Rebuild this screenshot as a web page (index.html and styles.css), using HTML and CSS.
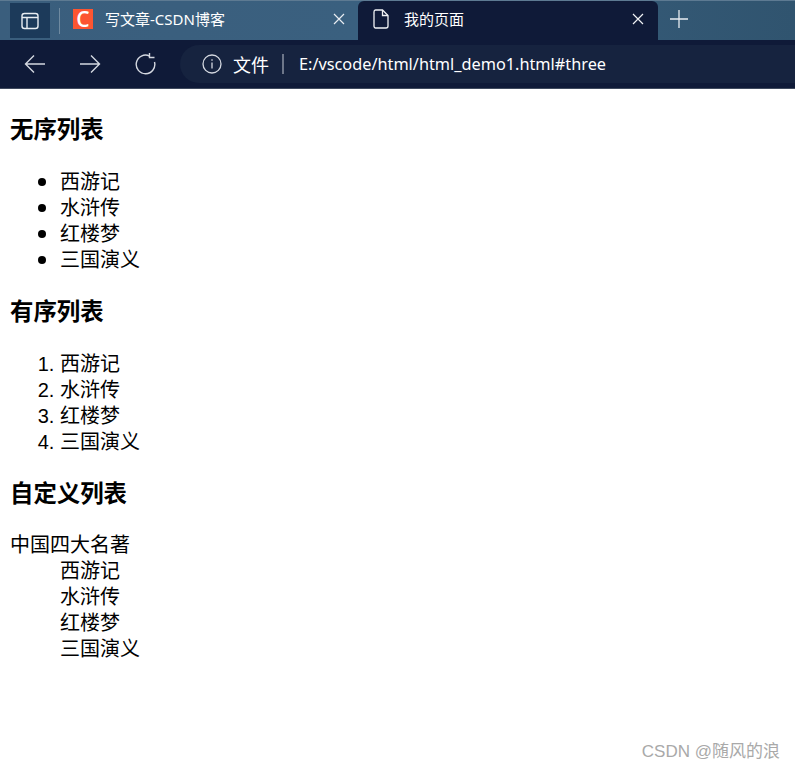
FILE: index.html
```html
<!DOCTYPE html>
<html lang="zh-CN">
<head>
<meta charset="utf-8">
<title>我的页面</title>
<link rel="stylesheet" href="styles.css">
</head>
<body>
<header class="chrome">
  <div class="tabbar">
    <button class="side-btn" aria-label="标签页">
      <svg width="20" height="20" viewBox="0 0 20 20" fill="none" stroke="#e8edf2" stroke-width="1.4"><rect x="2" y="2.5" width="16" height="15" rx="2.5"/><path d="M2 6.5h16M7 6.5v11"/></svg>
    </button>
    <span class="tab-sep"></span>
    <div class="tab">
      <span class="favicon">C</span>
      <span class="tab-title">写文章-CSDN博客</span>
      <svg class="close" width="12" height="12" viewBox="0 0 12 12" stroke="#e8edf2" stroke-width="1.2"><path d="M1 1l10 10M11 1L1 11"/></svg>
    </div>
    <div class="tab active">
      <svg class="doc" width="16" height="20" viewBox="0 0 16 20" fill="none" stroke="#f0f2f5" stroke-width="1.3"><path d="M2.500 1h7l5.500 5.500V17a2 2 0 0 1-2 2H2.500a1.500 2 0 0 1-1.500-2V3a1.500 2 0 0 1 1.500-2z"/><path d="M9.500 1v5.500H15"/></svg>
      <span class="tab-title">我的页面</span>
      <svg class="close" width="12" height="12" viewBox="0 0 12 12" stroke="#f0f2f5" stroke-width="1.2"><path d="M1 1l10 10M11 1L1 11"/></svg>
    </div>
    <svg class="plus" width="18" height="18" viewBox="0 0 18 18" stroke="#e8edf2" stroke-width="1.3"><path d="M9 0v18M0 9h18"/></svg>
  </div>
  <div class="navbar">
    <svg class="nav-icon" width="22" height="20" viewBox="0 0 22 20" fill="none" stroke="#d4d8e0" stroke-width="1.4"><path d="M21 10H1.500M10 1.500L1.500 10l8.500 8.500"/></svg>
    <svg class="nav-icon" width="22" height="20" viewBox="0 0 22 20" fill="none" stroke="#d4d8e0" stroke-width="1.4"><path d="M1 10h19.500M12 1.500l8.500 8.500-8.500 8.500"/></svg>
    <svg class="nav-icon" width="22" height="22" viewBox="0 0 22 22" fill="none" stroke="#d4d8e0" stroke-width="1.4"><path d="M15.500 3a9.300 9.300 0 1 0 5 6"/><path d="M15 .5V5h5" transform="translate(.5 -.5)"/></svg>
    <div class="address">
      <svg class="info" width="20" height="20" viewBox="0 0 20 20" fill="none" stroke="#d4d8e0" stroke-width="1.300"><circle cx="10" cy="10" r="9"/><path d="M10 8.500v6M10 5.200v1.500"/></svg>
      <span class="file-label">文件</span>
      <span class="addr-sep"></span>
      <span class="url">E:/vscode/html/html_demo1.html#three</span>
    </div>
  </div>
</header>
<main class="page">
  <h3>无序列表</h3>
  <ul>
    <li>西游记</li>
    <li>水浒传</li>
    <li>红楼梦</li>
    <li>三国演义</li>
  </ul>
  <h3>有序列表</h3>
  <ol>
    <li>西游记</li>
    <li>水浒传</li>
    <li>红楼梦</li>
    <li>三国演义</li>
  </ol>
  <h3>自定义列表</h3>
  <dl>
    <dt>中国四大名著</dt>
    <dd>西游记</dd>
    <dd>水浒传</dd>
    <dd>红楼梦</dd>
    <dd>三国演义</dd>
  </dl>
</main>
<div class="watermark">CSDN @随风的浪</div>
</body>
</html>
```
FILE: styles.css
```css
html, body {
  margin: 0;
  padding: 0;
  height: 770px;
  overflow: hidden;
  background: #fff;
}
body {
  position: relative;
  font-family: "Noto Sans CJK SC", "Noto Sans", sans-serif;
  color: #000;
}
.chrome {
  height: 89px;
  background: #0f1a38;
  border-bottom: 1px solid #3f4a5e;
  box-sizing: border-box;
  display: flex;
  flex-direction: column;
}
.tabbar {
  height: 40px;
  display: flex;
  align-items: stretch;
  padding-left: 10px;
  background: linear-gradient(90deg, #3a5e7d 0%, #3a607f 45%, #30546f 100%);
  border-top: 1px solid #5d7a92;
  box-sizing: border-box;
}
.side-btn {
  width: 40px;
  height: 35px;
  margin-top: 2px;
  padding: 0;
  border: 0;
  background: #1c3a5a;
  display: flex;
  align-items: center;
  justify-content: center;
}
.tab-sep {
  width: 1px;
  height: 26px;
  margin: 7px 0 0 9px;
  background: #6f8aa0;
}
.tab {
  width: 298px;
  box-sizing: border-box;
  display: flex;
  align-items: center;
  padding: 0 13px 3px 13px;
  color: #fff;
  font: 15px "Noto Sans", "Noto Sans CJK SC", sans-serif;
}
.tab.active {
  width: 300px;
  background: #0f1a38;
  border-radius: 6px 6px 0 0;
  padding-left: 15px;
  padding-right: 14px;
}
.favicon {
  width: 20px;
  height: 20px;
  background: #fc5531;
  color: #fff;
  font: 600 21px/20px "Open Sans", sans-serif;
  text-align: center;
  flex: none;
  margin-right: 12px;
}
.doc {
  flex: none;
  margin-right: 15px;
}
.tab-title {
  flex: 1;
  white-space: nowrap;
  line-height: 20px;
}
.close {
  flex: none;
}
.plus {
  margin: 9px 0 0 12px;
}
.navbar {
  height: 48px;
  display: flex;
  align-items: center;
  padding-left: 24px;
  gap: 33px;
}
.nav-icon {
  flex: none;
}
.address {
  flex: 1;
  height: 38px;
  margin-left: -9px;
  display: flex;
  align-items: center;
  padding-left: 22px;
  background: #16233f;
  border-radius: 19px 0 0 19px;
  color: #fff;
}
.info {
  flex: none;
}
.file-label {
  font-size: 18px;
  margin-left: 11px;
}
.addr-sep {
  width: 2px;
  height: 20px;
  margin: 0 15px 0 13px;
  background: #6d7689;
}
.url {
  font: 16.300px "Noto Sans", sans-serif;
}
.page {
  padding: 1px 10px 0;
  font-size: 20px;
  line-height: 26px;
}
h3 {
  font-size: 23.400px;
  line-height: 31px;
  margin: 23.400px 0;
  font-weight: 700;
}
ul, ol {
  margin: 20px 0;
  padding-left: 50px;
}
ol li::marker {
  font-family: "Liberation Sans", sans-serif;
}
dl {
  margin: 20px 0;
}
dd {
  margin-left: 50px;
}
.watermark {
  position: absolute;
  right: 15px;
  top: 741px;
  font: 17px/22px "Liberation Sans", "Noto Sans CJK SC", sans-serif;
  color: #a9a9a9;
}
```
